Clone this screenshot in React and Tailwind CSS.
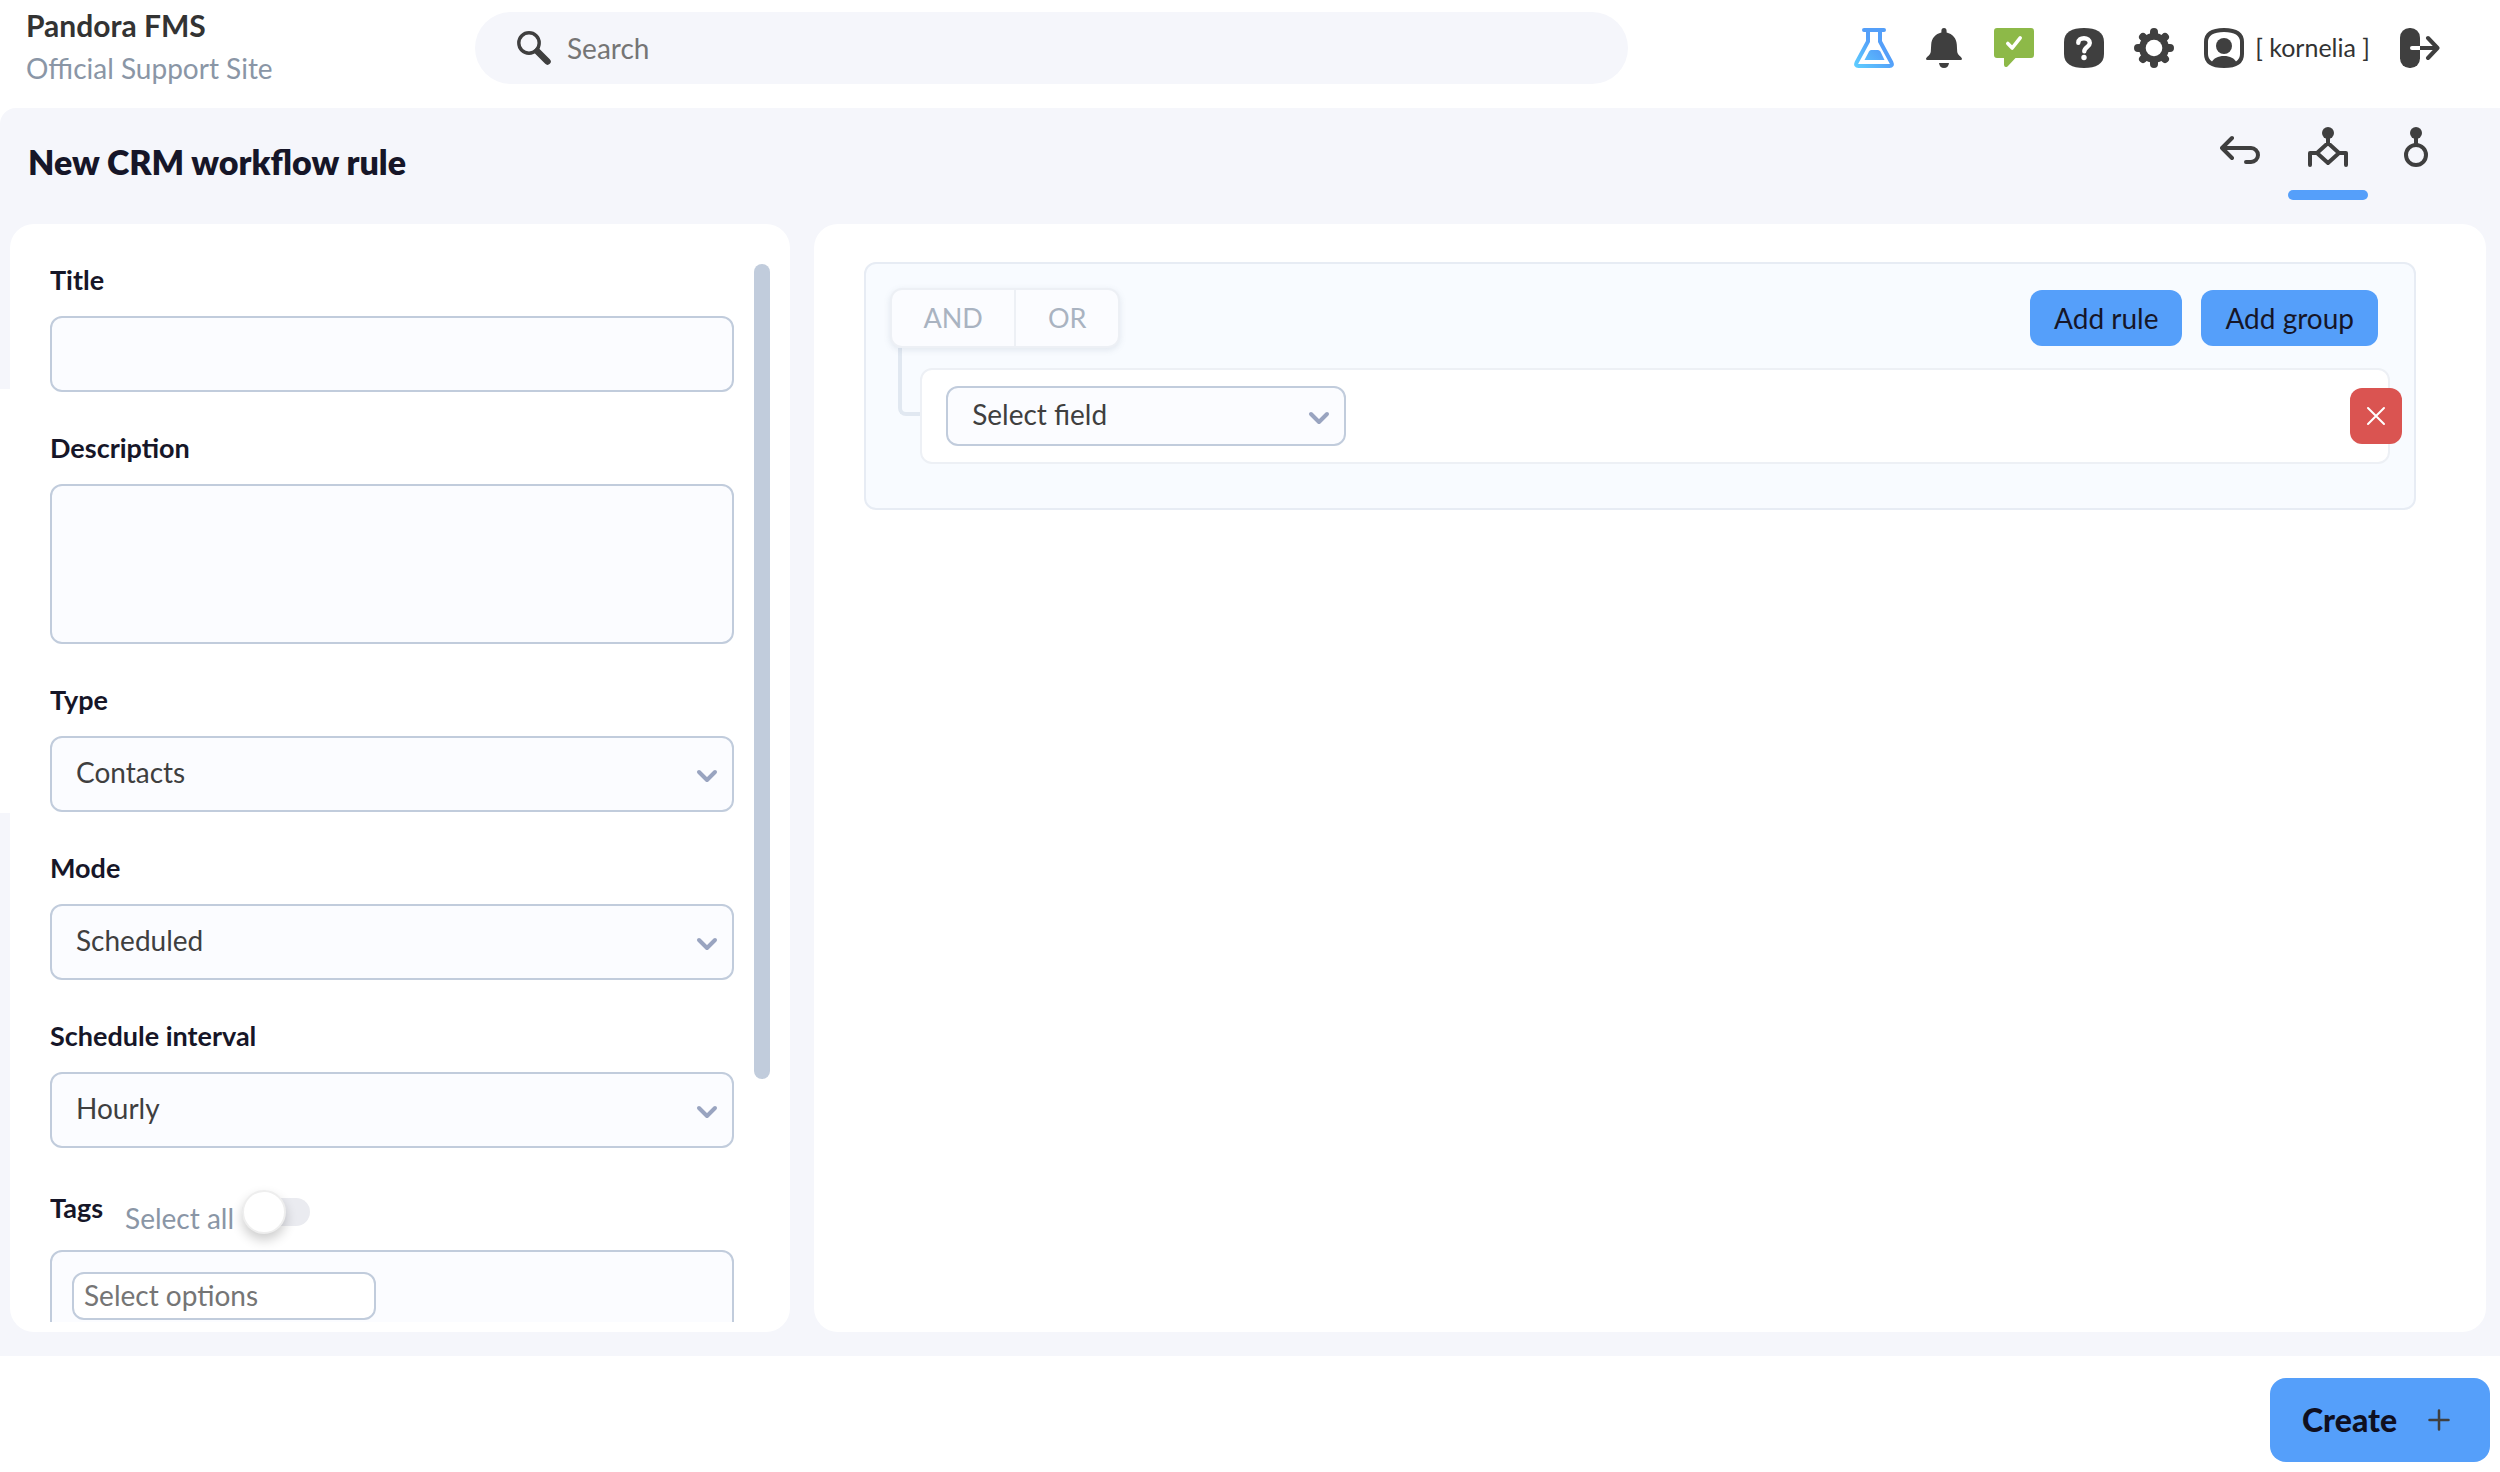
import React, { useState } from "react";

function SearchIcon() {
  return (
    <svg viewBox="0 0 34 34" className="size-[34px] shrink-0" fill="none" stroke="#3f3f3f" aria-hidden="true">
      <circle cx="12" cy="12" r="10.2" strokeWidth="3.4" />
      <path d="M20.5 20.5 30.5 30.5" strokeWidth="6.5" strokeLinecap="round" />
      <path d="M18 18l4 4" strokeWidth="3.5" />
    </svg>
  );
}

function FlaskIcon() {
  return (
    <svg viewBox="0 0 40 40" className="size-10" aria-hidden="true">
      <defs>
        <linearGradient id="flask" x1="0" y1="40" x2="22" y2="18" gradientUnits="userSpaceOnUse">
          <stop offset="0" stopColor="#5fd0ff" />
          <stop offset="1" stopColor="#549ff9" />
        </linearGradient>
      </defs>
      <path d="M10 2H30M14 2V13.5L2.6 34.5Q1 38 4.5 38H35.5Q39 38 37.4 34.5L26 13.5V2" fill="none" stroke="url(#flask)" strokeWidth="4" strokeLinecap="round" strokeLinejoin="round" />
      <path d="M17 22H24Q25.600 22 26.400 23.600L30.500 32H10.500L15 23.500Q15.800 22 17 22Z" fill="url(#flask)" />
    </svg>
  );
}

function BellIcon() {
  return (
    <svg viewBox="0 0 40 40" className="size-10" fill="#3f3f3f" aria-hidden="true">
      <path d="M20 0C21.800 0 22.600 1.300 22.600 3V4.600C28.500 6 32.500 10.500 32.800 16.500L33.200 23.500C33.300 25 34 26.300 35.200 27.400C37 29 38 30 38 31Q38 32 36.500 32H3.500Q2 32 2 31C2 30 3 29 4.800 27.400C6 26.300 6.700 25 6.800 23.500L7.200 16.500C7.500 10.500 11.500 6 17.400 4.600V3C17.400 1.300 18.200 0 20 0Z" />
      <path d="M15 35H25C24.800 38 22.800 40 20 40S15.200 38 15 35Z" />
    </svg>
  );
}

function ChatCheckIcon() {
  return (
    <svg viewBox="0 0 40 40" className="size-10" aria-hidden="true">
      <path d="M3 0H37Q40 0 40 3V27Q40 30 37 30H21.500L13.500 38.400Q10.500 40 10 37V30H3Q0 30 0 27V3Q0 0 3 0Z" fill="#8db948" />
      <path d="M13.800 15.500 18.200 20 26.200 9.800" fill="none" stroke="#fff" strokeWidth="3.600" strokeLinecap="round" strokeLinejoin="round" />
    </svg>
  );
}

function HelpIcon() {
  return (
    <svg viewBox="0 0 40 40" className="size-10" aria-hidden="true">
      <path d="M0 14C0 4 8 0 20 0S40 4 40 14V26C40 36 32 40 20 40S0 36 0 26Z" fill="#3f3f3f" />
      <path d="M14.300 14.800C14.300 11.600 16.800 10.200 20 10.200S25.800 12 25.800 15C25.800 19 20.300 19 20.300 23.300" fill="none" stroke="#fff" strokeWidth="4.400" strokeLinecap="round" />
      <circle cx="20" cy="29.500" r="2.700" fill="#fff" />
    </svg>
  );
}

function GearIcon() {
  return (
    <svg viewBox="0 0 40 40" className="size-10" aria-hidden="true">
      <g stroke="#3f3f3f" strokeWidth="8" strokeLinecap="round">
        <path d="M20 4V36M4 20H36M9 9 31 31M31 9 9 31" />
      </g>
      <circle cx="20" cy="20" r="15" fill="#3f3f3f" />
      <circle cx="20" cy="20" r="8.300" fill="#fff" />
    </svg>
  );
}

function UserIcon() {
  return (
    <svg viewBox="0 0 40 40" className="size-10" aria-hidden="true">
      <path d="M2 14C2 5.500 9 2 20 2S38 5.500 38 14V26C38 34.500 31 38 20 38S2 34.500 2 26Z" fill="#fff" stroke="#3f3f3f" strokeWidth="4" />
      <circle cx="20" cy="18" r="8" fill="#3f3f3f" />
      <path d="M7.500 34.500C9.500 30.300 14 28 20 28S30.500 30.300 32.500 34.500C29 37 25 38.500 20 38.500S11 37 7.500 34.500Z" fill="#3f3f3f" />
    </svg>
  );
}

function LogoutIcon() {
  return (
    <svg viewBox="0 0 40 40" className="size-10" aria-hidden="true">
      <rect width="20" height="40" rx="9.500" fill="#3f3f3f" />
      <path d="M12 20H22" stroke="#fff" strokeWidth="4" strokeLinecap="round" />
      <path d="M20 20H37" stroke="#3f3f3f" strokeWidth="4" />
      <path d="M28 10 37.500 20 28 30" fill="none" stroke="#3f3f3f" strokeWidth="4" strokeLinecap="round" strokeLinejoin="round" />
    </svg>
  );
}

function BackIcon() {
  return (
    <svg viewBox="0 0 40 40" className="size-10" fill="none" stroke="#3f3f3f" strokeWidth="4" strokeLinecap="round" strokeLinejoin="round" aria-hidden="true">
      <path d="M12 11 2 21 12 31M2 21H31A7 7 0 0 1 31 35H26" />
    </svg>
  );
}

function WorkflowIcon() {
  return (
    <svg viewBox="0 0 40 40" className="size-10" fill="none" stroke="#3f3f3f" strokeWidth="4" strokeLinecap="round" strokeLinejoin="round" aria-hidden="true">
      <circle cx="20" cy="6" r="6" fill="#3f3f3f" stroke="none" />
      <path d="M20 8V16M20 16 31 26 20 36 9 26ZM9 26H2V38M31 26H38V38" />
    </svg>
  );
}

function NodeIcon() {
  return (
    <svg viewBox="0 0 40 40" className="size-10" fill="none" stroke="#3f3f3f" strokeWidth="4" aria-hidden="true">
      <circle cx="20" cy="6" r="6" fill="#3f3f3f" stroke="none" />
      <path d="M20 8V18" />
      <circle cx="20" cy="28" r="10" />
    </svg>
  );
}

function Chevron() {
  return (
    <svg viewBox="0 0 22 22" className="pointer-events-none absolute inset-y-0 right-4 my-auto size-[22px]" fill="none" stroke="#99a4c0" strokeWidth="4" strokeLinecap="round" strokeLinejoin="round" aria-hidden="true">
      <path d="M3 9 11 17 19 9" />
    </svg>
  );
}

const labelClass = "text-[27px] leading-8 font-bold text-[#161628]";
const boxClass = "w-full rounded-xl border-2 border-[#c1ccdc] bg-[#fbfcff] text-[28px] text-[#3f3f3f]";

function SelectField({ id, label, value }) {
  return (
    <div className="flex flex-col gap-5">
      <label htmlFor={id} className={labelClass}>{label}</label>
      <div className="relative">
        <select id={id} className={`${boxClass} block h-19 appearance-none px-6 pb-1`}>
          <option>{value}</option>
        </select>
        <Chevron />
      </div>
    </div>
  );
}

function Header() {
  return (
    <header className="flex h-[108px] shrink-0 items-start bg-white">
      <div className="w-[19%] pl-[26px] pt-1">
        <p className="text-[30px] leading-[42px] font-bold text-[#333]">Pandora FMS</p>
        <p className="text-[28px] leading-[44px] text-[#8a96a6]">Official Support Site</p>
      </div>
      <label className="mt-3 flex h-18 w-[46.1%] items-center gap-4 rounded-full bg-[#f5f6fb] px-[42px]">
        <SearchIcon />
        <input type="search" aria-label="Search" placeholder="Search" className="min-w-0 flex-1 bg-transparent text-[28px] text-[#3f3f3f] outline-none placeholder:text-[#757575]" />
      </label>
      <nav className="mt-7 mr-15 ml-auto flex h-10 items-center gap-[30px]">
        <button aria-label="Labs"><FlaskIcon /></button>
        <button aria-label="Notifications"><BellIcon /></button>
        <button aria-label="Chat"><ChatCheckIcon /></button>
        <button aria-label="Help"><HelpIcon /></button>
        <button aria-label="Settings"><GearIcon /></button>
        <a href="#profile" className="flex items-center gap-[11px] text-[25px] text-[#333]">
          <UserIcon />
          <span>[ kornelia ]</span>
        </a>
        <button aria-label="Log out"><LogoutIcon /></button>
      </nav>
    </header>
  );
}

function TitleBar() {
  return (
    <div className="flex h-[116px] shrink-0 items-start justify-between pr-10 pl-7">
      <h1 className="pt-[34px] text-[34px] leading-10 font-extrabold text-[#161628]">New CRM workflow rule</h1>
      <div className="flex">
        <button aria-label="Back" className="flex h-23 w-22 justify-center pt-[19px]"><BackIcon /></button>
        <button aria-label="Workflow rule" className="flex h-23 w-22 flex-col items-center justify-between pt-[19px]">
          <WorkflowIcon />
          <span className="h-[10px] w-20 rounded-full bg-[#559ffa]" />
        </button>
        <button aria-label="Actions" className="flex h-23 w-22 justify-center pt-[19px]"><NodeIcon /></button>
      </div>
    </div>
  );
}

function RuleForm() {
  const [all, setAll] = useState(false);
  return (
    <section className="flex min-h-0 gap-5 overflow-hidden rounded-3xl bg-white pt-10 pr-5 pb-[10px] pl-10">
      <form className="flex min-w-0 flex-1 flex-col gap-10 overflow-hidden">
        <div className="flex flex-col gap-5">
          <label htmlFor="title" className={labelClass}>Title</label>
          <input id="title" type="text" className={`${boxClass} block h-19 px-6`} />
        </div>
        <div className="flex flex-col gap-5">
          <label htmlFor="description" className={labelClass}>Description</label>
          <textarea id="description" className={`${boxClass} block h-40 resize-none px-6 py-4`} />
        </div>
        <SelectField id="type" label="Type" value="Contacts" />
        <SelectField id="mode" label="Mode" value="Scheduled" />
        <SelectField id="interval" label="Schedule interval" value="Hourly" />
        <div>
          <div className="flex h-[62px] items-start">
            <label htmlFor="tags" className={`${labelClass} pt-1`}>Tags</label>
            <label htmlFor="all" className="pt-[14px] pr-2 pl-[22px] text-[28px] leading-8 text-[#8a96a6]">Select all</label>
            <input
              id="all"
              type="checkbox"
              role="switch"
              checked={all}
              onChange={(e) => setAll(e.target.checked)}
              className="relative mt-[10px] h-7 w-17 appearance-none rounded-full bg-[#eaebf0] before:absolute before:-top-2 before:left-0 before:size-11 before:rounded-full before:border-2 before:border-[#eeeeee] before:bg-white before:shadow-[0_6px_12px_rgba(0,0,0,0.2)] checked:bg-[#559ffa] checked:before:left-6"
            />
          </div>
          <div className={`${boxClass} h-28 p-5`}>
            <input id="tags" type="text" placeholder="Select options" className="block h-12 w-76 rounded-xl border-2 border-[#c1ccdc] bg-white px-[10px] pb-[2px] text-[28px] placeholder:text-[#757575]" />
          </div>
        </div>
      </form>
      <div className="w-4 shrink-0">
        <div className="h-[77%] rounded-full bg-[#c1ccdc]" />
      </div>
    </section>
  );
}

function RuleBuilder() {
  return (
    <section className="rounded-3xl bg-white pt-[38px] pr-[70px] pl-[50px]">
      <div className="rounded-xl border-2 border-[#e7ecf4] bg-[#f8fbff] pt-6 pr-6 pb-11 pl-6">
        <div className="flex items-center justify-between pr-3">
          <div className="relative z-10 flex h-15 rounded-xl border-2 border-[#edf0f5] bg-[#fbfcff] text-[27px] text-[#a9b3c1] shadow-[0_2px_6px_rgba(100,120,150,0.15)]">
            <button className="w-[124px] border-r-2 border-[#edf0f5]">AND</button>
            <button className="w-[102px]">OR</button>
          </div>
          <div className="flex gap-[19px] text-[28px] text-[#161628]">
            <button className="h-14 rounded-xl bg-[#559ffa] px-6">Add rule</button>
            <button className="h-14 rounded-xl bg-[#559ffa] px-6">Add group</button>
          </div>
        </div>
        <div className="flex pl-2">
          <div className="h-17 w-[22px] shrink-0 rounded-bl-lg border-b-4 border-l-4 border-[#e1e8f1]" />
          <div className="mt-5 flex h-24 flex-1 items-center justify-between rounded-xl border-2 border-[#edf0f5] bg-white pl-6">
            <div className="relative">
              <select aria-label="Field" className="block h-15 w-100 appearance-none rounded-xl border-2 border-[#c1ccdc] bg-[#fbfcff] px-6 pb-1 text-[28px] text-[#3f3f3f]">
                <option>Select field</option>
              </select>
              <Chevron />
            </div>
            <button aria-label="Delete rule" className="-mr-[14px] flex h-14 w-13 items-center justify-center rounded-xl bg-[#da5451]">
              <svg viewBox="0 0 20 20" className="size-5" stroke="#fff" strokeWidth="2" strokeLinecap="round" aria-hidden="true">
                <path d="M2 2 18 18M18 2 2 18" />
              </svg>
            </button>
          </div>
        </div>
      </div>
    </section>
  );
}

export default function App() {
  return (
    <div className="flex h-screen flex-col bg-white font-[Lato,sans-serif]">
      <Header />
      <main className="relative flex min-h-0 flex-1 flex-col rounded-tl-2xl bg-[#f5f6fb]">
        <div className="absolute top-[281px] left-0 h-[424px] w-[10px] bg-white" />
        <TitleBar />
        <div className="grid min-h-0 flex-1 grid-cols-[7fr_15fr] gap-6 pr-[14px] pb-6 pl-[10px]">
          <RuleForm />
          <RuleBuilder />
        </div>
      </main>
      <footer className="flex h-29 shrink-0 items-start justify-end bg-white pt-[22px] pr-[10px]">
        <button className="flex h-21 w-55 items-center justify-between rounded-2xl bg-[#559ffa] pr-10 pl-8 text-[32px] font-black text-[#0f0f1f]">
          Create
          <svg viewBox="0 0 22 22" className="size-[22px]" stroke="#3f3f3f" strokeWidth="2.500" strokeLinecap="round" aria-hidden="true">
            <path d="M11 1.500V20.500M1.500 11H20.500" />
          </svg>
        </button>
      </footer>
    </div>
  );
}
